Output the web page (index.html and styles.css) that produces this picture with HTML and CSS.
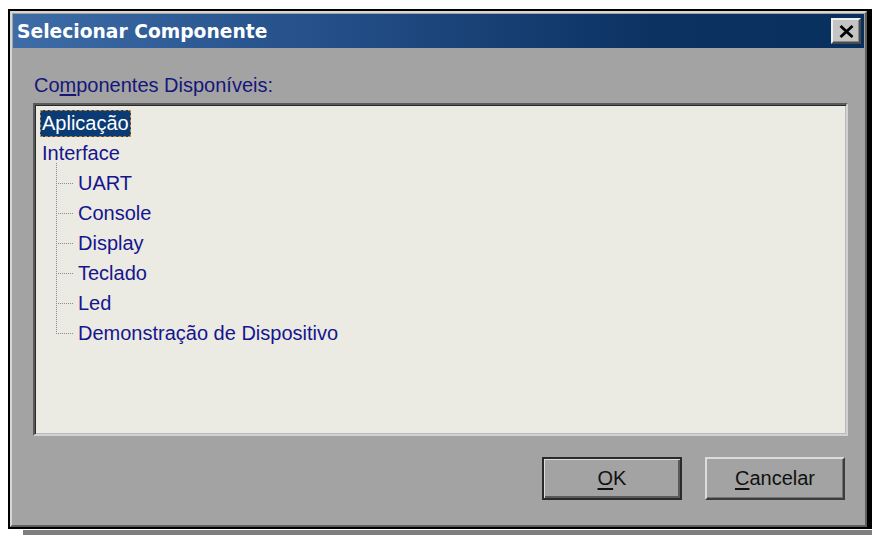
FILE: index.html
```html
<!DOCTYPE html>
<html lang="pt">
<head>
<meta charset="utf-8">
<title>Selecionar Componente</title>
<link rel="stylesheet" href="styles.css">
</head>
<body>
<div class="window">
  <div class="frame">
    <div class="titlebar">
      <span class="title">Selecionar Componente</span>
      <button class="close" aria-label="Fechar">
        <svg width="15" height="13" viewBox="0 0 15 13"><path d="M1.5 1 L13.5 12 M13.5 1 L1.5 12" stroke="#000" stroke-width="2.8" fill="none"/></svg>
      </button>
    </div>
    <div class="content">
      <div class="label">Co<u>m</u>ponentes Disponíveis:</div>
      <div class="tree">
        <div class="node root"><span class="text selected">Aplicação</span></div>
        <div class="node root"><span class="text">Interface</span></div>
        <div class="children">
          <div class="node child"><span class="text">UART</span></div>
          <div class="node child"><span class="text">Console</span></div>
          <div class="node child"><span class="text">Display</span></div>
          <div class="node child"><span class="text">Teclado</span></div>
          <div class="node child"><span class="text">Led</span></div>
          <div class="node child last"><span class="text">Demonstração de Dispositivo</span></div>
        </div>
      </div>
      <div class="buttons">
        <button class="btn default"><span class="face"><u>O</u>K</span></button>
        <button class="btn"><span class="face"><u>C</u>ancelar</span></button>
      </div>
    </div>
  </div>
</div>
<div class="behind"></div>
</body>
</html>
```
FILE: styles.css
```css
html, body {
  margin: 0;
  padding: 0;
  background: #fff;
  overflow: hidden;
}

.window {
  margin: 9px 0 0 8px;
  width: 857px;
  height: 516px;
  border: 2px solid #000;
  border-right-width: 5px;
}

.frame {
  box-sizing: border-box;
  height: 100%;
  background: #a3a3a3;
  border-top: 2px solid #d6d6d6;
  border-left: 2px solid #d6d6d6;
  border-right: 2px solid #5e5e5e;
  border-bottom: 2px solid #5e5e5e;
  padding: 1px 1px 0 1px;
  display: flex;
  flex-direction: column;
}

.titlebar {
  height: 34px;
  display: flex;
  align-items: center;
  justify-content: space-between;
  padding: 0 3px 0 4px;
  background: linear-gradient(to right, #3d6ca6 0%, #25508a 35%, #0c3262 75%, #08305e 100%);
}

.title {
  font-family: "DejaVu Sans", sans-serif;
  font-weight: bold;
  font-size: 18.7px;
  color: #fff;
  margin-top: 1px;
}

.close {
  width: 30px;
  height: 26px;
  padding: 0;
  margin: 0;
  display: flex;
  align-items: center;
  justify-content: center;
  background: #c4c4c4;
  border: 2px solid;
  border-color: #f0f0f0 #4a4a4a #4a4a4a #f0f0f0;
  box-shadow: inset -1px -1px 0 #888;
}

.content {
  flex: 1;
  display: flex;
  flex-direction: column;
  padding: 26px 16px 0 20px;
  font-family: "Liberation Sans", sans-serif;
  font-size: 20px;
}

.label {
  color: #16167a;
  line-height: 22px;
  margin-left: 1px;
}

.label u {
  text-decoration-thickness: 2px;
  text-underline-offset: 2px;
}

.tree {
  margin-top: 7px;
  height: 333px;
  box-sizing: border-box;
  background: #ebeae3;
  border-top: 2px solid #5a5a5a;
  border-left: 2px solid #5a5a5a;
  border-right: 2px solid #d2d2d2;
  border-bottom: 2px solid #d2d2d2;
  box-shadow: inset 1px 1px 0 #2a2a2a, inset -1px -1px 0 #b8b8b8;
  padding: 3px 0 0 5px;
  color: #15158e;
}

.node {
  height: 30px;
  display: flex;
  align-items: center;
  position: relative;
}

.text {
  padding: 0 1px;
  line-height: 25px;
  border: 1px solid transparent;
}

.selected {
  background: #0b3b74;
  color: #fff;
  border: 1px dashed #c98a3c;
}

.children {
  position: relative;
  padding-left: 36px;
}

/* dotted vertical trunk of the tree */
.children::before {
  content: "";
  position: absolute;
  left: 16px;
  top: -5px;
  height: 171px;
  border-left: 1px dotted #8c8c8c;
}

/* dotted branch to each child */
.child::before {
  content: "";
  position: absolute;
  left: -20px;
  top: 15px;
  width: 17px;
  border-top: 1px dotted #8c8c8c;
}

.buttons {
  margin-top: 21px;
  display: flex;
  justify-content: flex-end;
  gap: 23px;
  padding-right: 3px;
}

.btn {
  width: 140px;
  height: 43px;
  padding: 0;
  margin: 0;
  background: #a3a3a3;
  border: 2px solid;
  border-color: #dcdcdc #3c3c3c #3c3c3c #dcdcdc;
  box-shadow: inset -1px -1px 0 #727272;
  font-family: "Liberation Sans", sans-serif;
  font-size: 20px;
  color: #111;
}

.btn.default {
  border: 2px solid #2a2a2a;
  box-shadow: inset 1px 1px 0 #dcdcdc, inset -2px -2px 0 #5a5a5a;
}

.btn u {
  text-decoration-thickness: 2px;
  text-underline-offset: 3px;
}

.behind {
  margin: 1px 0 0 23px;
  height: 8px;
  background: #7e7e7e;
}
```
